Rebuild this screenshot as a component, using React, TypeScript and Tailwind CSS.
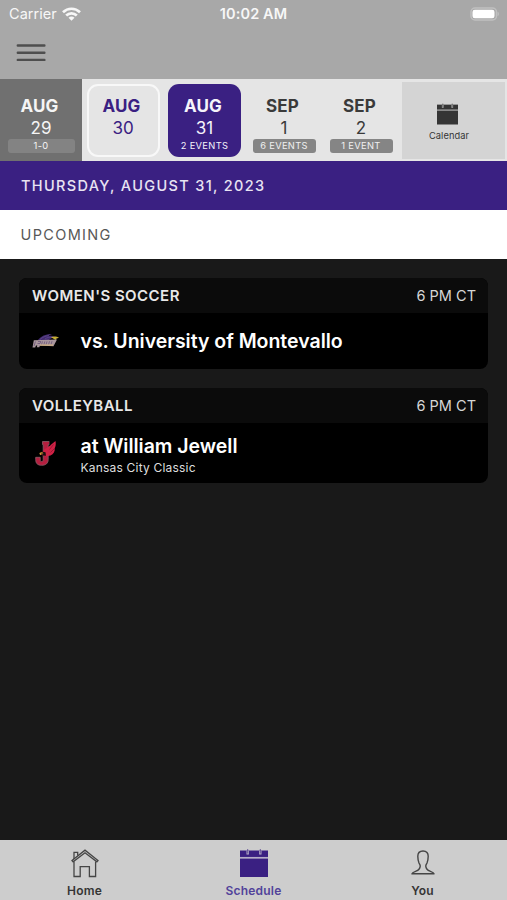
import React from 'react';
import clsx from 'clsx';

type Day = {
  month: string;
  day: string;
  label?: string;
  cell: string;
  box: string;
  pill?: string;
};

const days: Day[] = [
  { month: 'AUG', day: '29', label: '1-0', cell: 'w-[82px] bg-[#707070]', box: 'w-[67px] text-[#f5f5f5]', pill: 'bg-[#838383]' },
  { month: 'AUG', day: '30', cell: 'w-[82px]', box: 'w-[73px] rounded-[11px] border-2 border-[#f8f8f8] text-[#3a2082]' },
  { month: 'AUG', day: '31', label: '2 EVENTS', cell: 'w-[81px]', box: 'w-[73px] rounded-[11px] bg-[#3a2082] text-[#f5f3fa]' },
  { month: 'SEP', day: '1', label: '6 EVENTS', cell: 'w-[78px]', box: 'w-[63px] text-[#3a3a3a]', pill: 'bg-[#858585] text-[#f0f0f0]' },
  { month: 'SEP', day: '2', label: '1 EVENT', cell: 'w-[76px]', box: 'w-[63px] text-[#3a3a3a]', pill: 'bg-[#858585] text-[#f0f0f0]' },
];

const CalendarIcon: React.FC<{ className?: string; gap: string }> = ({ className, gap }) => (
  <svg className={className} viewBox="0 0 28 28" fill="currentColor" aria-hidden="true">
    <path d="M0 1.500h28V28H0z" />
    <path d="M0 8.800h28" stroke={gap} strokeWidth="1.7" />
    <path d="M7.700 1.500v4M20.300 1.500v4" stroke={gap} strokeWidth="2.400" />
    <path d="M7.700 0v4.500M20.300 0v4.500" stroke="currentColor" strokeWidth="1" opacity=".65" />
  </svg>
);

const HomeIcon: React.FC = () => (
  <svg width="28" height="29" viewBox="0 0 28 29" fill="none" stroke="#454545" strokeWidth="1.3" aria-hidden="true">
    <path d="M1 11.600 14 1.200 27 11.600l-1.100 1.200L14 3.800 2.100 12.800z" />
    <path d="M3 12.400v15.100h6.200v-9.800h9.200v9.800h6.200V12.400M3 10V3.400h3.700v3.200" />
  </svg>
);

const PersonIcon: React.FC = () => (
  <svg width="24" height="26" viewBox="0 0 24 26" fill="none" stroke="#454545" strokeWidth="1.4" strokeLinejoin="round" aria-hidden="true">
    <path d="M12 1C8.300 1 6.800 3.400 6.800 6.300c0 3 .6 5.100 1.200 6.800.5 1.300 1.400 1.700 1.200 3.300-.3 2.800-1.800 3.900-4.200 4.800-2.200.8-3.800 1.300-4.100 2.600h22.200c-.3-1.300-1.900-1.800-4.100-2.600-2.400-.9-3.900-2-4.200-4.800-.2-1.600.7-2 1.200-3.300.6-1.700 1.200-3.800 1.200-6.800C17.200 3.400 15.700 1 12 1z" />
  </svg>
);

const HawkLogo: React.FC = () => (
  <svg width="28" height="16" viewBox="0 0 28 16" aria-hidden="true">
    <path d="M6 7C9 3 14 .8 20 1l-5 2.200c3-.7 6-.5 8 .7l-4 1.500-3 2H6z" fill="#432b70" />
    <path d="M8 6.500c3-2.500 5-3.500 9-4M13 6c2-1.500 4-2 7-1.800" stroke="#6c5895" fill="none" strokeWidth=".6" />
    <path d="M19 4.200c3-1.300 6-.8 8 .5l-2.500.7-.9 1.700-1.600-1.100z" fill="#c5ad32" />
    <path d="M1.800 7.200 25 6.500l-3.500 6.800L8 12.600l-.7 1.600H4.800l.5-1.800-1.300.2-.8 2H.5z" fill="#a8959c" />
    <path d="M3.500 8.500 2 13M6 8.500h2.800l-.8 2H5.500M10.500 8.400l-1 3.200M12.800 8.400l-.9 3.200M15 8.400l-.9 3.200M17.500 8.200l-.9 3.400M20 8.200l-1 3.400" stroke="#57406d" fill="none" strokeWidth=".6" />
    <path d="M8 12.100h13" stroke="#d1b180" strokeWidth="1.200" />
  </svg>
);

const CardinalLogo: React.FC = () => (
  <svg width="24" height="27" viewBox="0 0 24 27" aria-hidden="true">
    <path d="M8.500 1.500h7v3h-1.300v15c0 4-2.500 5.800-6.500 5.800-4.300 0-6-2-6-5.800v-2.200h4.500V20c0 1 .5 1.500 1.500 1.500s1.500-.6 1.500-1.700V4.500h-.7z" fill="#b51f3f" stroke="#8a6069" strokeWidth=".8" />
    <path d="M21.500 1c.6 3 .2 5.300-.8 7.200.5 3-1.200 5.800-4.200 7.300l-5 1-4.200-2 2-3.800c1.500-2 4.500-3 6.700-5.200z" fill="#cf2145" />
    <path d="m19.500 4.500-4 5m5-1-4 4" stroke="#81152c" strokeWidth=".7" />
    <path d="M15.800 1v4.500" stroke="#000" strokeWidth=".8" />
    <path d="m7.500 11.500 4 .8.500 3.500-3.300-.4z" fill="#17100f" />
    <path d="M5.500 13c1.500-1.300 3.300-1 4 .3l-2.800.4 1 1.400c-1.500.1-2.300-.7-2.200-2.100z" fill="#dda23c" />
  </svg>
);

type EventProps = {
  sport: string;
  title: string;
  note?: string;
  logo: React.ReactNode;
};

const EventCard: React.FC<EventProps> = ({ sport, title, note, logo }) => (
  <li className="overflow-hidden rounded-lg bg-black">
    <div className="flex h-[35px] items-center justify-between bg-[#0b0b0b] pr-3 pl-[13px]">
      <h3 className="pt-0.5 text-[15px] font-semibold tracking-[0.450px] text-[#e8e8e8]">{sport}</h3>
      <p className="text-[14.5px] text-[#d6d6d6]">6 PM CT</p>
    </div>
    <div className={clsx('flex items-center pl-[13px]', note ? 'h-15' : 'h-14')}>
      <div className={clsx('flex w-12', note && 'pl-0.5')}>{logo}</div>
      <div className={clsx('pl-[0.5px]', note && 'pt-[3px]')}>
        <p className="text-[19.5px] leading-6 font-semibold tracking-[-0.020px] text-white">{title}</p>
        {note && <p className="mt-0.5 text-[12px] leading-4 tracking-[0.2px] text-[#dedede]">{note}</p>}
      </div>
    </div>
  </li>
);

const App: React.FC = () => (
  <div className="flex h-[900px] w-[507px] flex-col overflow-hidden bg-[#191919] font-['Inter',sans-serif]">
    <header className="h-[79px] shrink-0 bg-[#a8a8a8] text-[#f7f7f7]">
      <div className="grid h-[27px] grid-cols-3 items-center px-2">
        <div className="flex items-center gap-[5px] pl-px">
          <span className="text-[14.5px] tracking-[0.05px]">Carrier</span>
          <svg width="19" height="14" viewBox="0 0 19 14" fill="none" stroke="currentColor" strokeWidth="2.700" aria-hidden="true">
            <path d="M1 5.200c4.800-4.600 12.200-4.600 17 0M4.200 8.500c3-2.900 7.600-2.900 10.600 0" />
            <path d="M6.500 10.800c1.700-1.600 4.300-1.600 6 0l-3 3z" fill="currentColor" stroke="none" />
          </svg>
        </div>
        <span className="text-center text-[14.5px] font-semibold tracking-[0.1px]">10:02 AM</span>
        <svg className="justify-self-end" width="30" height="14" viewBox="0 0 30 14" aria-hidden="true">
          <rect x="2" y="1" width="25.500" height="12" rx="4" fill="none" stroke="#c0c0c0" strokeWidth="1.500" />
          <rect x="3.500" y="2.800" width="22" height="8.500" rx="2.300" fill="#fff" />
          <path d="M28.600 4.800c1.700.7 1.700 3.700 0 4.400z" fill="#c0c0c0" />
        </svg>
      </div>
      <button className="mt-4 ml-4 block" aria-label="Menu">
        <svg width="30" height="20" viewBox="0 0 30 20" stroke="#4e4e4e" strokeWidth="2.400" strokeLinecap="round" aria-hidden="true">
          <path d="M1.800 2.500h26.600M1.800 9.700h26.600M1.800 16.900h26.600" />
        </svg>
      </button>
    </header>

    <div className="flex h-[82px] shrink-0 bg-[#e5e5e5]">
      {days.map(d => (
        <div key={d.day} className={clsx('flex items-center justify-center', d.cell)}>
          <div className={clsx('flex h-[73px] flex-col items-center justify-end', d.box, d.label ? 'pb-1' : 'pb-4')}>
            <p className="pr-[3px] text-[17px] leading-[22px] font-bold tracking-[0.2px]">{d.month}</p>
            <p className="text-[17px] leading-[22px]">{d.day}</p>
            {d.label && (
              <p className={clsx('h-[14px] w-full rounded-[3px] text-center text-[9.300px] leading-[14px] tracking-[0.350px]', d.pill)}>{d.label}</p>
            )}
          </div>
        </div>
      ))}
      <button className="mt-[3px] ml-[3px] flex h-[77px] w-[103px] flex-col items-center bg-[#d4d4d4] pt-[21px] pr-[13px] text-[#353535]">
        <CalendarIcon className="h-[22px] w-[21px]" gap="#a7a7a7" />
        <span className="mt-1 pl-1 text-[9.300px] leading-[14px] tracking-[0.050px]">Calendar</span>
      </button>
    </div>

    <h1 className="flex h-[49px] shrink-0 items-center bg-[#3a2082] pl-[21px] text-[14.5px] font-medium tracking-[1.340px] text-[#e8e3f2]">
      THURSDAY, AUGUST 31, 2023
    </h1>
    <h2 className="flex h-[49px] shrink-0 items-center bg-white pl-[20.5px] text-[14.5px] tracking-[1.350px] text-[#575757]">UPCOMING</h2>

    <ul className="flex flex-1 flex-col gap-[19px] px-[19px] pt-[19px]">
      <EventCard sport="WOMEN'S SOCCER" title="vs. University of Montevallo" logo={<HawkLogo />} />
      <EventCard sport="VOLLEYBALL" title="at William Jewell" note="Kansas City Classic" logo={<CardinalLogo />} />
    </ul>

    <nav className="grid h-15 shrink-0 grid-cols-3 bg-[#cdcdcd] text-[12px] font-semibold tracking-[0.2px] text-[#353535]">
      <a href="#" className="flex flex-col items-center justify-between pt-[9px]">
        <HomeIcon />
        <span>Home</span>
      </a>
      <a href="#" className="flex flex-col items-center justify-between pt-[9px] text-[#3a2082]">
        <CalendarIcon className="h-7 w-7" gap="#b5adc8" />
        <span className="text-[#51429a]">Schedule</span>
      </a>
      <a href="#" className="flex flex-col items-center justify-between pt-[10px]">
        <PersonIcon />
        <span>You</span>
      </a>
    </nav>
  </div>
);

export default App;
